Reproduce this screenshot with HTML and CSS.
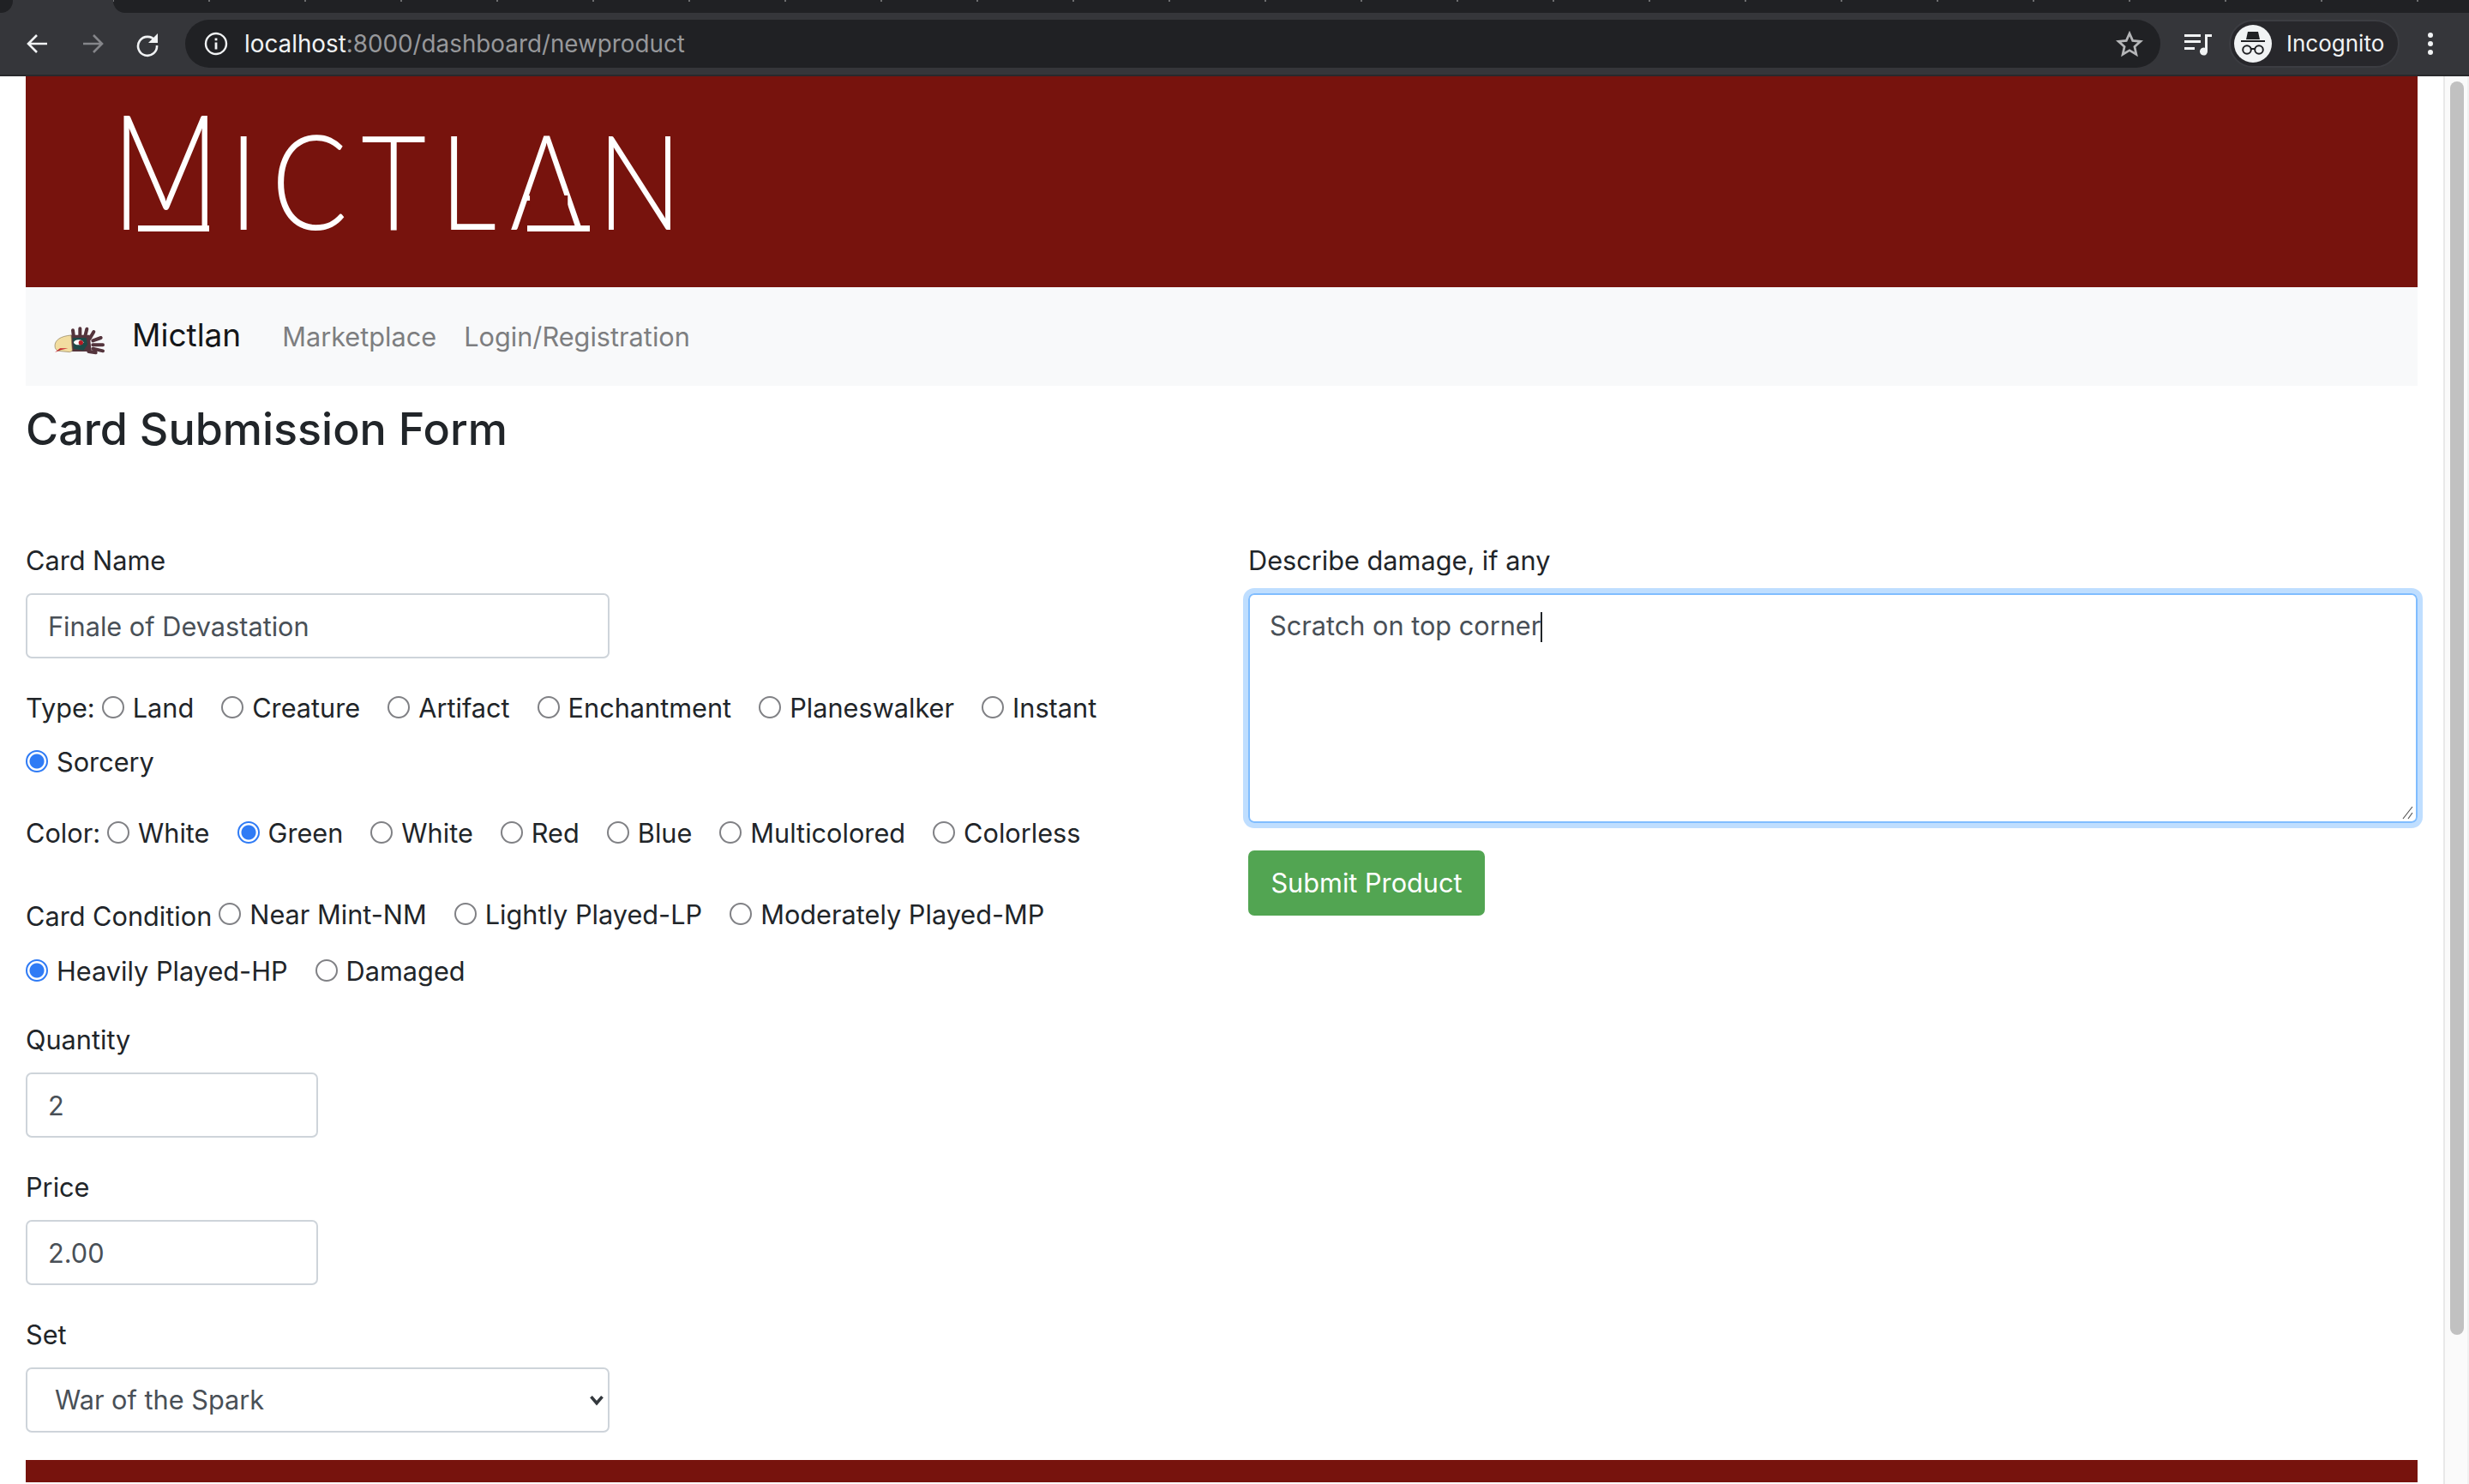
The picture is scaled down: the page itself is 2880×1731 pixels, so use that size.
FILE: index.html
```html
<!DOCTYPE html>
<html lang="en">
<head>
<meta charset="utf-8">
<title>Mictlan</title>
<link rel="stylesheet" href="styles.css">
</head>
<body>
<div class="tabstrip"><div class="tab-prev"></div><div class="tab-active"></div><div class="tab-rest"></div></div>
<div class="toolbar">
  <svg class="tb-icon" viewBox="0 0 32 32"><path d="M27 16H6M15 6L5 16l10 10" fill="none" stroke="#f1f3f4" stroke-width="2.6"/></svg>
  <svg class="tb-icon dim" viewBox="0 0 32 32"><path d="M5 16h21M17 6l10 10-10 10" fill="none" stroke="#85868a" stroke-width="2.6"/></svg>
  <svg class="tb-icon" viewBox="0 0 32 32"><path d="M25 12.500A11 11 0 1 0 27 18" fill="none" stroke="#f1f3f4" stroke-width="2.600"/><path d="M28 4v11H17z" fill="#f1f3f4"/></svg>
  <div class="omnibox">
    <svg class="info" viewBox="0 0 28 28"><circle cx="14" cy="14" r="12" fill="none" stroke="#f1f3f4" stroke-width="2.400"/><rect x="12.600" y="12.500" width="2.800" height="8" fill="#f1f3f4"/><rect x="12.600" y="7.500" width="2.800" height="2.800" fill="#f1f3f4"/></svg>
    <span class="url"><span class="url-host">localhost</span>:8000/dashboard/newproduct</span>
    <svg class="star" viewBox="0 0 32 32"><path d="M16 4l3.700 8.400 9.100.9-6.900 6.100 2 9L16 23.700l-7.900 4.700 2-9-6.900-6.100 9.100-.9z" fill="none" stroke="#b5b6b8" stroke-width="2.700"/></svg>
  </div>
  <svg class="queue" viewBox="0 0 34 28"><path d="M1 3h19v3H1zM1 10h19v3H1zM1 18h12v3H1z" fill="#f1f3f4"/><path d="M25 3h8v3h-5v17a4.500 4.500 0 1 1-3-4.200z" fill="#f1f3f4"/></svg>
  <div class="profile">
    <div class="avatar">
      <svg viewBox="0 0 44 44"><path d="M16 8h12l2 9H14z" fill="#202124"/><rect x="8" y="18" width="28" height="2" fill="#202124"/><circle cx="15" cy="29" r="4.800" fill="none" stroke="#202124" stroke-width="2"/><circle cx="29" cy="29" r="4.800" fill="none" stroke="#202124" stroke-width="2"/><path d="M20 28h4" stroke="#202124" stroke-width="2"/></svg>
    </div>
    <span class="profile-name">Incognito</span>
  </div>
  <div class="dots"><i></i><i></i><i></i></div>
</div>

<div class="page">
  <header class="banner">
    <div class="logo"><span class="logo-m">M</span><span class="logo-rest">ICTLAN</span></div>
  </header>
  <nav class="navbar">
    <svg class="bird" viewBox="60 60 195 105">
      <g stroke="#54343c" stroke-width="12" stroke-linecap="round" fill="none">
        <path d="M138 100l-3-24M160 95V70M178 95l6-24M194 105l14-24M205 112l28-10M205 127h35M205 140l35 8M190 150l25 4"/>
      </g>
      <path d="M128 92h66l6 58h-70z" fill="#54343c"/>
      <path d="M72 130c0-20 20-34 57-37l4 55-9 4-40-4c-7-2-12-8-12-18z" fill="#f2dda0" stroke="#8a7a55" stroke-width="2"/>
      <path d="M134 102h48l4 24-14 20-34-6z" fill="#1d4a48"/>
      <ellipse cx="155" cy="118" rx="17" ry="9" fill="#fff"/>
      <circle cx="163" cy="119" r="8" fill="#b21a22"/>
      <path d="M72 153l18-14 28 0-26 6z" fill="#c3232b"/>
    </svg>
    <a class="brand" href="#">Mictlan</a>
    <a class="nav-link" href="#">Marketplace</a>
    <a class="nav-link" href="#">Login/Registration</a>
  </nav>
  <h1 class="title">Card Submission Form</h1>
  <form class="form-grid">
    <div class="col">
      <div class="group">
        <label class="label">Card Name</label>
        <input class="control wide" type="text" value="Finale of Devastation">
      </div>
      <div class="radios radios-type">
        <span class="radios-label">Type:</span>
        <label class="opt"><input type="radio" name="t"><span>Land</span></label>
        <label class="opt"><input type="radio" name="t"><span>Creature</span></label>
        <label class="opt"><input type="radio" name="t"><span>Artifact</span></label>
        <label class="opt"><input type="radio" name="t"><span>Enchantment</span></label>
        <label class="opt"><input type="radio" name="t"><span>Planeswalker</span></label>
        <label class="opt"><input type="radio" name="t"><span>Instant</span></label>
        <label class="opt"><input type="radio" name="t" checked><span>Sorcery</span></label>
      </div>
      <div class="radios radios-color">
        <span class="radios-label">Color:</span>
        <label class="opt"><input type="radio" name="c"><span>White</span></label>
        <label class="opt"><input type="radio" name="c" checked><span>Green</span></label>
        <label class="opt"><input type="radio" name="c"><span>White</span></label>
        <label class="opt"><input type="radio" name="c"><span>Red</span></label>
        <label class="opt"><input type="radio" name="c"><span>Blue</span></label>
        <label class="opt"><input type="radio" name="c"><span>Multicolored</span></label>
        <label class="opt"><input type="radio" name="c"><span>Colorless</span></label>
      </div>
      <div class="radios radios-cond">
        <span class="radios-label">Card Condition</span>
        <label class="opt"><input type="radio" name="d"><span>Near Mint-NM</span></label>
        <label class="opt"><input type="radio" name="d"><span>Lightly Played-LP</span></label>
        <label class="opt"><input type="radio" name="d"><span>Moderately Played-MP</span></label>
        <label class="opt"><input type="radio" name="d" checked><span>Heavily Played-HP</span></label>
        <label class="opt"><input type="radio" name="d"><span>Damaged</span></label>
      </div>
      <div class="group">
        <label class="label">Quantity</label>
        <input class="control narrow" type="text" value="2">
      </div>
      <div class="group">
        <label class="label">Price</label>
        <input class="control narrow" type="text" value="2.00">
      </div>
      <div class="group">
        <label class="label">Set</label>
        <div class="select-wrap">
          <select class="control wide select"><option>War of the Spark</option></select>
          <svg class="chevron" viewBox="0 0 16 12"><path d="M2 2l6 7 6-7" fill="none" stroke="#33383d" stroke-width="3.400"/></svg>
        </div>
      </div>
    </div>
    <div class="col">
      <div class="group">
        <label class="label">Describe damage, if any</label>
        <div class="area-wrap">
          <div class="area-text">Scratch on top corner<span class="caret"></span></div>
          <svg class="grip" viewBox="0 0 14 16"><path d="M1 15L12 1M7 15l5-7" stroke="#555" stroke-width="1.200" fill="none"/></svg>
        </div>
      </div>
      <button class="submit" type="button">Submit Product</button>
    </div>
  </form>
  <footer class="footer"></footer>
</div>
<div class="scrollbar"><div class="thumb"></div></div>
</body>
</html>
```
FILE: styles.css
```css
* { box-sizing: border-box; }
html, body { margin: 0; height: 100%; overflow: hidden; background: #fff; }
body { font-family: Inter, "Liberation Sans", sans-serif; font-size: 30.7px; line-height: 48px; color: #212529; }

.tabstrip { height: 15px; display: flex; background: #35363a; }
.tab-prev { width: 15px; background: #202124; border-bottom-right-radius: 14px; }
.tab-active { width: 117px; }
.tab-rest { flex: 1; background-color: #202124; background-image: linear-gradient(to right, #6d6e70 2px, transparent 2px); background-size: 112px 2px; background-position: 111px 0; background-repeat: repeat-x; border-bottom-left-radius: 14px; }
.toolbar { height: 74px; background: #35363a; border-bottom: 2px solid #28292c; display: flex; align-items: center; padding: 0 0 0 28px; }
.tb-icon { width: 32px; height: 32px; margin-right: 32px; }
.tb-icon:nth-of-type(3) { margin-right: 28px; }
.omnibox { width: 2304px; height: 56px; border-radius: 28px; background: #202124; display: flex; align-items: center; padding: 0 20px 0 22px; }
.info { width: 28px; height: 28px; margin-right: 19px; }
.url { font-size: 27.800px; color: #97989b; line-height: 56px; flex: 1; }
.url-host { color: #f1f3f4; }
.star { width: 32px; height: 32px; }
.queue { width: 34px; height: 28px; margin-left: 27px; }
.profile { width: 199px; height: 56px; margin-left: 19px; border-radius: 28px; background: #27272b; border: 2px solid #3c3d42; display: flex; align-items: center; padding-left: 4px; }
.avatar { width: 44px; height: 44px; border-radius: 50%; background: #f1f3f4; }
.avatar svg { width: 44px; height: 44px; display: block; }
.profile-name { color: #f1f3f4; font-size: 26px; line-height: 40px; margin-left: 17px; }
.dots { margin-left: 33px; display: flex; flex-direction: column; gap: 4px; }
.dots i { width: 6px; height: 6px; border-radius: 50%; background: #f1f3f4; display: block; }

.page { width: 2790px; margin-left: 30px; }
.banner { height: 246px; background: #77130d; padding: 31px 0 0 100px; }
.logo { display: flex; align-items: baseline; color: #fff; font-family: Lato, sans-serif; font-weight: 300; line-height: 150px; position: relative; }
.logo-m { font-size: 188px; width: 137px; transform: scaleX(.74); transform-origin: left; }
.logo-rest { font-size: 155px; letter-spacing: 18px; transform: scaleX(.85); transform-origin: left; position: relative; }
.logo-rest::before { content: ""; position: absolute; left: 413px; width: 52px; height: 14px; bottom: 41px; background: #77130d; }
.logo::before { content: ""; position: absolute; left: 31px; width: 83px; height: 7px; bottom: 13px; background: #fff; }
.logo::after { content: ""; position: absolute; left: 485px; width: 73px; height: 7px; bottom: 13px; background: #fff; }
.navbar { height: 115px; background: #f8f9fa; display: flex; align-items: center; padding-left: 30px; }
.bird { width: 65px; height: 35px; margin: 10px 29px 0 0; }
.brand { color: #141618; font-size: 37px; text-decoration: none; margin: 0 48px 3px 0; }
.nav-link { color: #7d7e80; text-decoration: none; margin-right: 32px; }
.title { margin: 16px 0 0; font-size: 52px; font-weight: 500; line-height: 70px; color: #212529; }

.form-grid { display: grid; grid-template-columns: 1396px 1364px; column-gap: 30px; margin-top: 92px; }
.group { margin-bottom: 32px; }
.label { display: block; padding-top: 2px; margin-bottom: 14px; }
.control { display: block; height: 76px; border: 2px solid #ced4da; border-radius: 7px; background: #fff; color: #495057; font: inherit; padding: 0 24px; }
.wide { width: 681px; }
.narrow { width: 341px; }
.radios { display: flex; flex-wrap: wrap; align-items: center; }
.radios-label { margin-right: 8px; }
.opt { display: flex; align-items: center; margin-right: 32px; gap: 10px; }
.opt input { appearance: none; width: 26px; height: 26px; margin: 0 0 2px; border: 2px solid #808185; border-radius: 50%; background: #fff; }
.opt input:checked { border-color: #2f7bf5; background: radial-gradient(circle, #2f7bf5 0 8px, #fff 9px); }
.radios-type { row-gap: 15px; padding-top: 2px; margin-bottom: 35px; }
.radios-color { margin-bottom: 47px; }
.radios-cond { row-gap: 18px; margin-bottom: 30px; }
.radios-cond .radios-label { transform: translateY(2px); }
.select-wrap { position: relative; width: 681px; }
.select { appearance: none; padding-left: 32px; width: 100%; }
.chevron { position: absolute; right: 6px; top: 32px; width: 18px; height: 13px; }
.area-wrap { position: relative; height: 268px; border: 2px solid #80bdff; border-radius: 7px; box-shadow: 0 0 0 6px rgba(0, 123, 255, .25); padding: 0 23px; color: #495057; }
.area-text { padding-top: 12px; }
.caret { display: inline-block; width: 2px; height: 35px; background: #212529; vertical-align: -8px; }
.grip { position: absolute; right: 2px; bottom: 2px; width: 14px; height: 16px; }
.submit { display: block; width: 276px; height: 76px; border: 0; border-radius: 7px; background: #52a552; color: #fff; font: inherit; padding: 0; }
.footer { height: 26px; background: #77130d; }

.scrollbar { position: absolute; left: 2850px; top: 89px; bottom: 0; width: 30px; background: #fafafa; border-left: 2px solid #e8e8e8; border-right: 2px solid #f0f0f0; padding: 6px 4px 0 6px; }
.thumb { height: 1462px; background: #c1c1c1; border-radius: 8px; }
```
